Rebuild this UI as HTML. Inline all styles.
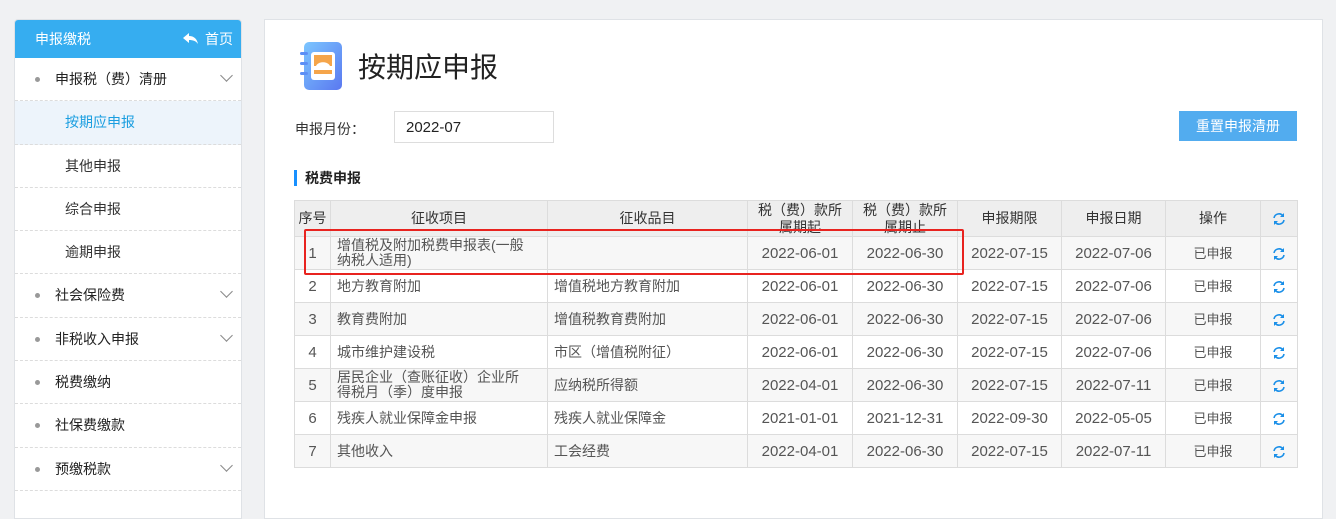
<!DOCTYPE html>
<html><head><meta charset="utf-8"><style>
*{margin:0;padding:0;box-sizing:border-box}
body{width:1336px;height:504px;background:#f0f1f3;font-family:"Liberation Sans","Noto Sans CJK SC",sans-serif;position:relative;overflow:hidden;color:#333}
.side{position:absolute;left:14px;top:19px;width:228px;height:500px;background:#fff;border:1px solid #dfe2e6;border-radius:4px 4px 0 0;overflow:hidden}
.sh{height:38px;background:#36adf0;color:#fff;font-size:14px;line-height:38px;padding-left:20px;position:relative}
.sh .home{position:absolute;right:8px;top:0}
.it{height:43.3px;border-bottom:1px dashed #dcdcdc;font-size:14px;line-height:43px;position:relative;color:#222}
.it.l1{padding-left:40px}
.it.l1:before{content:"";position:absolute;left:20px;top:19px;width:5px;height:5px;border-radius:50%;background:#999}
.it.l2{padding-left:50px;color:#333}
.it.act{background:#edf4fb;color:#1a9ee0}
.chev{position:absolute;right:10px;top:13px;width:9px;height:9px;border-right:1px solid #888;border-bottom:1px solid #888;transform:rotate(45deg)}
.main{position:absolute;left:264px;top:19px;width:1059px;height:500px;background:#fff;border:1px solid #dfe2e6}
.title{position:absolute;left:358px;top:46px;font-size:28px;color:#222}
.lbl{position:absolute;left:295px;top:119px;font-size:14px}
.inp{position:absolute;left:394px;top:111px;width:160px;height:32px;border:1px solid #ddd;font-size:15px;line-height:32px;padding-left:11px;color:#222}
.btn{position:absolute;left:1179px;top:111px;width:118px;height:30px;background:#52acef;color:#fff;font-size:14px;line-height:30px;text-align:center}
.sec{position:absolute;left:294px;top:170px;border-left:3px solid #1890ff;padding-left:8px;font-size:14px;font-weight:bold;line-height:16px;color:#222}
table{position:absolute;left:294px;top:200px;border-collapse:collapse;table-layout:fixed;font-size:14px;color:#555}
td,th{border:1px solid #dcdcdc;height:33px;text-align:center;font-weight:normal;line-height:15px;padding:0}
th{background:#eeeeee;color:#333;height:36px;line-height:17px}
tr.g td{background:#f7f7f7}
td.l{text-align:left;padding-left:6px}
td.d{font-size:15px}
td.s{font-size:13px}
.red{position:absolute;left:304px;top:229px;width:660px;height:46px;border:2px solid #e8231f;border-radius:2px}
</style></head><body>
<div class="side">
<div class="sh">申报缴税<span class="home"><svg width="16" height="12" viewBox="0 0 16 12" style="vertical-align:-1px;margin-right:6px"><path d="M6 0L0 5l6 5V7c4 0 7 1 9 4-1-5-4-8-9-8z" fill="#fff"/></svg>首页</span></div>
<div class="it l1">申报税（费）清册<span class="chev"></span></div>
<div class="it l2 act">按期应申报</div>
<div class="it l2">其他申报</div>
<div class="it l2">综合申报</div>
<div class="it l2">逾期申报</div>
<div class="it l1">社会保险费<span class="chev"></span></div>
<div class="it l1">非税收入申报<span class="chev"></span></div>
<div class="it l1">税费缴纳</div>
<div class="it l1">社保费缴款</div>
<div class="it l1">预缴税款<span class="chev"></span></div>
</div>
<div class="main"></div>
<svg style="position:absolute;left:298px;top:40px" width="46" height="52" viewBox="0 0 46 52">
<defs><linearGradient id="g" x1="0" y1="0" x2="1" y2="1"><stop offset="0" stop-color="#7cc6ff"/><stop offset="1" stop-color="#5a78f0"/></linearGradient></defs>
<rect x="6" y="2" width="38" height="48" rx="5" fill="url(#g)"/>
<rect x="2" y="12" width="8" height="3" rx="1.5" fill="#5d8ff5"/><rect x="2" y="22" width="8" height="3" rx="1.5" fill="#5d8ff5"/><rect x="2" y="32" width="8" height="3" rx="1.5" fill="#5d8ff5"/>
<rect x="13" y="12" width="24" height="28" rx="3" fill="#fff"/>
<rect x="16" y="15" width="18" height="11" fill="#f5a54a"/><path d="M18 26c2-5 12-5 14 0z" fill="#fff"/>
<rect x="16" y="30" width="18" height="4" fill="#f5a54a"/>
</svg>
<div class="title">按期应申报</div>
<div class="lbl">申报月份：</div>
<div class="inp">2022-07</div>
<div class="btn">重置申报清册</div>
<div class="sec">税费申报</div>
<table>
<colgroup><col width="36"><col width="217"><col width="200"><col width="105"><col width="105"><col width="104"><col width="104"><col width="95"><col width="37"></colgroup>
<tr><th>序号</th><th>征收项目</th><th>征收品目</th><th>税（费）款所<br>属期起</th><th>税（费）款所<br>属期止</th><th>申报期限</th><th>申报日期</th><th>操作</th><th>R</th></tr>
<tr class="g"><td class="d">1</td><td class="l">增值税及附加税费申报表(一般<br>纳税人适用)</td><td></td><td class="d">2022-06-01</td><td class="d">2022-06-30</td><td class="d">2022-07-15</td><td class="d">2022-07-06</td><td class="s">已申报</td><td>R</td></tr>
<tr><td class="d">2</td><td class="l">地方教育附加</td><td class="l">增值税地方教育附加</td><td class="d">2022-06-01</td><td class="d">2022-06-30</td><td class="d">2022-07-15</td><td class="d">2022-07-06</td><td class="s">已申报</td><td>R</td></tr>
<tr class="g"><td class="d">3</td><td class="l">教育费附加</td><td class="l">增值税教育费附加</td><td class="d">2022-06-01</td><td class="d">2022-06-30</td><td class="d">2022-07-15</td><td class="d">2022-07-06</td><td class="s">已申报</td><td>R</td></tr>
<tr><td class="d">4</td><td class="l">城市维护建设税</td><td class="l">市区（增值税附征）</td><td class="d">2022-06-01</td><td class="d">2022-06-30</td><td class="d">2022-07-15</td><td class="d">2022-07-06</td><td class="s">已申报</td><td>R</td></tr>
<tr class="g"><td class="d">5</td><td class="l">居民企业（查账征收）企业所<br>得税月（季）度申报</td><td class="l">应纳税所得额</td><td class="d">2022-04-01</td><td class="d">2022-06-30</td><td class="d">2022-07-15</td><td class="d">2022-07-11</td><td class="s">已申报</td><td>R</td></tr>
<tr><td class="d">6</td><td class="l">残疾人就业保障金申报</td><td class="l">残疾人就业保障金</td><td class="d">2021-01-01</td><td class="d">2021-12-31</td><td class="d">2022-09-30</td><td class="d">2022-05-05</td><td class="s">已申报</td><td>R</td></tr>
<tr class="g"><td class="d">7</td><td class="l">其他收入</td><td class="l">工会经费</td><td class="d">2022-04-01</td><td class="d">2022-06-30</td><td class="d">2022-07-15</td><td class="d">2022-07-11</td><td class="s">已申报</td><td>R</td></tr>
</table>
<div class="red"></div>
<script>
document.querySelectorAll('td,th').forEach(function(t){if(t.textContent==='R'){t.innerHTML='<svg width="14" height="14" viewBox="0 0 14 14" style="vertical-align:middle"><path d="M2 6a5 5 0 0 1 9-2M12 8a5 5 0 0 1-9 2" fill="none" stroke="#1a8fe8" stroke-width="1.6"/><path d="M12 1v4H8z M2 13V9h4z" fill="#1a8fe8"/></svg>';}});
</script>
</body></html>
